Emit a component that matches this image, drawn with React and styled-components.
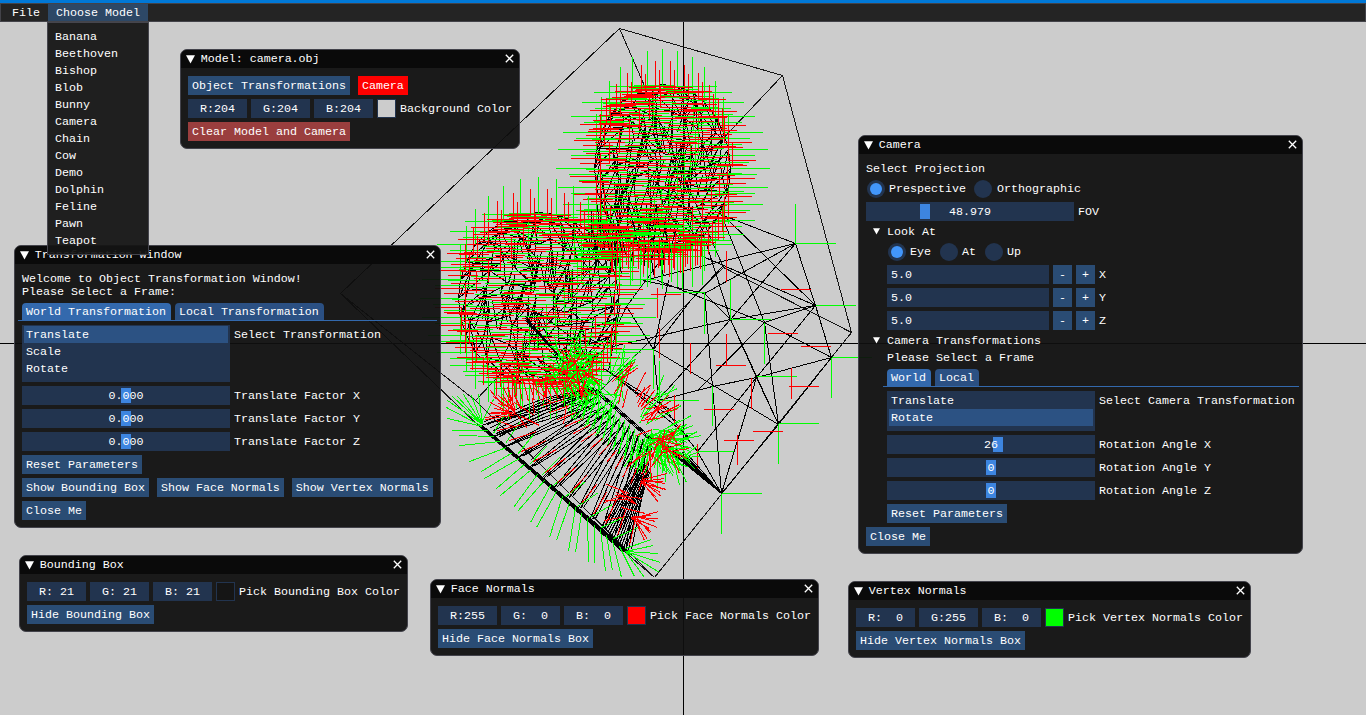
import React from "react";
import styled, { createGlobalStyle, css } from "styled-components";

const GlobalStyle = createGlobalStyle`
  html, body { margin: 0; padding: 0; overflow: hidden; background: #cccccc; }
  * { box-sizing: border-box; }
  body, button {
    font-family: "Liberation Mono", monospace;
    font-size: 11.667px;
    line-height: 13px;
    color: #fff;
  }
`;

const Desktop = styled.main`
  position: relative;
  width: 1366px;
  height: 715px;
  overflow: hidden;
  background: #cccccc;
  border-top: 3px solid #0078d7;
  white-space: pre;
`;

const Scene = styled.svg`
  position: absolute;
  left: 0;
  top: -3px;
  display: block;
`;

/* ---------- menu ---------- */

const MenuBar = styled.nav`
  position: relative;
  z-index: 3;
  display: flex;
  height: 19px;
  padding-left: 3px;
  background: #242424;
  border: 1px solid #434349;
`;

const MenuEntry = styled.div`
  height: 17px;
  padding: 3px 8px 0;
  background: ${(p) => (p.$open ? "#2d4866" : "transparent")};
`;

const MenuPopup = styled.div`
  position: absolute;
  z-index: 3;
  left: 47px;
  top: 19px;
  width: 102px;
  height: 233px;
  display: flex;
  flex-direction: column;
  gap: 4px;
  padding: 8px 7px 6px;
  background: rgba(20, 20, 20, 0.94);
  border: 1px solid #45454d;
`;

const MenuItem = styled.div`
  height: 13px;
`;

/* ---------- windows ---------- */

const WindowFrame = styled.section`
  position: absolute;
  z-index: 2;
  left: ${(p) => p.$x}px;
  top: ${(p) => p.$y - 3}px;
  width: ${(p) => p.$w}px;
  background: rgba(15, 15, 15, 0.94);
  border: 1px solid #43434b;
  border-radius: 7px;
  overflow: hidden;
`;

const TitleBar = styled.header`
  display: flex;
  align-items: flex-start;
  height: 18px;
  padding: 4px 5px 0;
  background: #0a0a0a;
`;

const TitleText = styled.div`
  flex: 1;
  margin-left: 5.7px;
  margin-top: -1px;
  height: 13px;
`;

const Body = styled.div`
  display: flex;
  flex-direction: column;
  align-items: flex-start;
  gap: 4px;
  padding: 8px 7px 7px;
`;

const Indent = styled.div`
  display: flex;
  flex-direction: column;
  align-items: flex-start;
  align-self: stretch;
  gap: 4px;
  padding-left: 21px;
`;

const Row = styled.div`
  display: flex;
  gap: ${(p) => p.$gap ?? 4}px;
`;

const Label = styled.div`
  padding-top: ${(p) => (p.$inline ? 4 : 1)}px;
  margin-bottom: -1px;
`;

const tones = { blue: "#2a4c74", red: "#ff0000", clear: "#9a3e3e" };

const Button = styled.button`
  height: 19px;
  width: ${(p) => (p.$square ? "19px" : "auto")};
  margin: 0;
  padding: 4px ${(p) => (p.$square ? 0 : 4)}px 2px;
  border: 0;
  border-radius: 0;
  text-align: center;
  background: ${(p) => tones[p.$tone ?? "blue"]};
`;

const frame = css`
  background: #22344f;
  height: 19px;
  padding: 4px 4px 2px;
`;

const ColorField = styled.div`
  ${frame}
  width: 59px;
  text-align: center;
`;

const Swatch = styled.div`
  width: 19px;
  height: 19px;
  border: 1px solid #22344f;
  background: ${(p) => p.$color};
`;

const TextField = styled.div`
  ${frame}
  width: 162px;
`;

const SliderTrack = styled.div`
  ${frame}
  position: relative;
  width: 208px;
`;

const SliderGrab = styled.div`
  position: absolute;
  left: ${(p) => p.$at}px;
  top: 2px;
  width: 10px;
  height: 15px;
  background: #3d85e0;
`;

const SliderValue = styled.div`
  position: relative;
  width: 200px;
  text-align: center;
`;

const TabBar = styled.div`
  display: flex;
  align-self: stretch;
  gap: 4px;
  height: 19px;
  margin: 0 -4px;
  padding: 1px 4px 0;
  border-bottom: 1px solid #3369ad;
`;

const Tab = styled.div`
  height: 17px;
  padding: 3px 5px 0 4px;
  border-radius: 4px 4px 0 0;
  background: ${(p) => (p.$active ? "#3369ad" : "#2b5083")};
`;

const ListBox = styled.div`
  width: 208px;
  height: ${(p) => p.$h}px;
  padding: 1px 2px;
  background: #22344f;
`;

const ListItem = styled.div`
  height: 17px;
  padding: 3px 2px 0;
  background: ${(p) => (p.$selected ? "#2c5283" : "transparent")};
`;

const RadioLabel = styled.div`
  display: flex;
  gap: 4px;
  height: 19px;
`;

const RadioCircle = styled.div`
  display: grid;
  place-items: center;
  width: 18px;
  height: 18px;
  margin: 0.5px;
  border-radius: 50%;
  background: #22344f;
`;

const RadioDot = styled.div`
  width: 12px;
  height: 12px;
  border-radius: 50%;
  background: #4296fa;
`;

const TreeHeader = styled.div`
  display: flex;
  align-items: center;
  gap: 7px;
  height: 13px;
  padding-left: 7px;
`;

const GlyphShift = styled.svg`
  display: block;
  margin-top: ${(p) => p.$dy ?? 0}px;
`;

function Arrow({ size, dy }) {
  return (
    <GlyphShift $dy={dy} width={size} height={size} viewBox="0 0 9 9">
      <path d="M0 0.2H9L4.5 8.4Z" fill="#fff" />
    </GlyphShift>
  );
}

function CloseIcon() {
  return (
    <svg width="9" height="9" viewBox="0 0 9 9">
      <path d="M0.8 0.8L8.2 8.2M8.2 0.8L0.8 8.2" stroke="#fff" strokeWidth="1.3" />
    </svg>
  );
}

function Window({ x, y, w, title, children }) {
  return (
    <WindowFrame $x={x} $y={y} $w={w}>
      <TitleBar>
        <Arrow size={9} dy={1} />
        <TitleText>{title}</TitleText>
        <CloseIcon />
      </TitleBar>
      <Body>{children}</Body>
    </WindowFrame>
  );
}

function Slider({ value, at, label }) {
  return (
    <Row>
      <SliderTrack>
        <SliderGrab $at={at} />
        <SliderValue>{value}</SliderValue>
      </SliderTrack>
      <Label $inline>{label}</Label>
    </Row>
  );
}

function Radio({ label, checked }) {
  return (
    <RadioLabel>
      <RadioCircle>{checked && <RadioDot />}</RadioCircle>
      <Label $inline>{label}</Label>
    </RadioLabel>
  );
}

function ColorPicker({ rgb, label }) {
  return (
    <Row>
      {["R", "G", "B"].map((c, i) => (
        <ColorField key={c}>{c + ":" + String(rgb[i]).padStart(3, " ")}</ColorField>
      ))}
      <Swatch $color={`rgb(${rgb.join(",")})`} />
      <Label $inline>{label}</Label>
    </Row>
  );
}

function StepperField({ label }) {
  return (
    <Row>
      <TextField>5.0</TextField>
      <Button $square>-</Button>
      <Button $square>+</Button>
      <Label $inline>{label}</Label>
    </Row>
  );
}

/* ---------- wireframe model ---------- */

function makeRandom(seed) {
  let a = seed;
  return () => {
    a = (a + 0x6d2b79f5) | 0;
    let t = Math.imul(a ^ (a >>> 15), 1 | a);
    t = (t + Math.imul(t ^ (t >>> 7), 61 | t)) ^ t;
    return ((t ^ (t >>> 14)) >>> 0) / 4294967296;
  };
}

const seg = (x1, y1, x2, y2) =>
  `M${Math.round(x1) + 0.5} ${Math.round(y1) + 0.5}L${Math.round(x2) + 0.5} ${Math.round(y2) + 0.5}`;

function buildReel(cx, cy, rx, ry, seed) {
  const rnd = makeRandom(seed);
  const black = [];
  const red = [];
  const green = [];
  const N = 28;
  const rings = [1, 0.9, 0.68, 0.42, 0.2];
  const pts = rings.map((r, k) =>
    Array.from({ length: N }, (_, i) => {
      const a = (i / N) * Math.PI * 2 + k * 0.1;
      const j = k ? 10 : 0;
      return [cx + Math.cos(a) * rx * r + (rnd() - 0.5) * j, cy + Math.sin(a) * ry * r + (rnd() - 0.5) * j];
    })
  );
  pts.forEach((ring, k) =>
    ring.forEach((p, i) => {
      const n = ring[(i + 1) % N];
      black.push(seg(...p, ...n));
      if (pts[k + 1] && (k < 2 || i % 2)) {
        black.push(seg(...p, ...pts[k + 1][i]));
        black.push(seg(...p, ...pts[k + 1][(i + 1) % N]));
      }
    })
  );
  for (let i = 0; i < 80; i++) {
    const a = rnd() * Math.PI * 2;
    const r = Math.sqrt(rnd()) * 0.8;
    const x = cx + Math.cos(a) * rx * r;
    const y = cy + Math.sin(a) * ry * r;
    black.push(seg(x, y - 14, x + (rnd() - 0.6) * 16, y + 14));
  }
  pts[0].forEach((p, i) => {
    const a = (i / N) * Math.PI * 2;
    const c = Math.cos(a);
    const s = Math.sin(a);
    const m = [cx + Math.cos(a + 0.12) * rx * 0.97, cy + Math.sin(a + 0.12) * ry * 0.97];
    if (Math.abs(c) > 0.2) {
      green.push(seg(...p, p[0] + Math.sign(c) * 39, p[1]));
      green.push(seg(p[0] - Math.sign(c) * 14, p[1] + 6, p[0] + Math.sign(c) * 26, p[1] + 6));
      red.push(seg(...m, m[0] + Math.sign(c) * 27, m[1]));
      red.push(seg(m[0] - Math.sign(c) * 12, m[1] + 5, m[0] + Math.sign(c) * 18, m[1] + 5));
    }
    if (Math.abs(s) > 0.08) {
      green.push(seg(...p, p[0], p[1] + Math.sign(s) * 36));
      red.push(seg(...m, m[0], m[1] + Math.sign(s) * 27));
      red.push(seg(m[0] + 4, m[1] - Math.sign(s) * 6, m[0] + 4, m[1] + Math.sign(s) * 18));
    }
  });
  for (let i = 0; i < 120; i++) {
    const y = cy - ry + ((i + 0.5) / 120) * ry * 2;
    const half = Math.sqrt(Math.max(0, 1 - ((y - cy) / ry) ** 2)) * rx;
    const x = cx + (((i * 0.618) % 1) * 2 - 1) * half;
    const u = cx + (((i * 0.618 + 0.37) % 1) * 2 - 1) * half;
    green.push(seg(x - 20, y, x + 20, y));
    red.push(seg(u - 15, y + 1, u + 15, y + 1));
    if (i % 2) {
      const w = cx + (rnd() * 2 - 1) * half;
      red.push(seg(w - 15, y, w + 15, y));
    }
    if (i % 8 === 0) {
      green.push(seg(x, y, x, y + 34));
      red.push(seg(u, y, u, y + 22));
    }
  }
  return { black, red, green };
}

/* the bracket joining the two reels */
function buildBridge() {
  const rnd = makeRandom(5);
  const black = [];
  const red = [];
  const green = [];
  for (let i = 0; i < 34; i++) {
    const y = 212 + i * 1.4;
    const x = 585 + rnd() * 90;
    const u = 590 + rnd() * 85;
    green.push(seg(x - 20, y, x + 20, y));
    red.push(seg(u - 15, y + 1, u + 15, y + 1));
    black.push(seg(u, y - 8, u + (rnd() - 0.5) * 14, y + 18));
  }
  for (let i = 0; i < 18; i++) {
    const x = 612 + i * 5.2;
    const y = 236 + rnd() * 10;
    red.push(seg(x, y, x, y + 28));
    if (i % 2) green.push(seg(x + 2, y + 6, x + 2, y + 44));
  }
  return { black, red, green };
}

function buildHood() {
  const rnd = makeRandom(77);
  const black = [];
  const red = [];
  const green = [];
  const lerp = (a, b, t) => a + (b - a) * t;
  const base = (t) => [lerp(481, 625, t), lerp(425, 551, t)];
  const rim = (t) => [lerp(590, 649, t), lerp(388, 442, t)];

  for (let i = -3; i <= 3; i++) black.push(seg(481 + i, 425 + i * 0.5, 625 + i * 0.6, 551 - i * 0.3));
  for (let i = 0; i < 6; i++) {
    black.push(seg(484 + i * 3, 421 + i * 3, 546 + i * 4, 397 + i));
    black.push(seg(546 + i * 4, 397 + i, 594, 388 + i));
    if (i < 3) black.push(seg(525, 316 + i * 2, 590 + i, 392));
    if (i % 2) black.push(seg(590 + i, 388, 649 + i, 440));
  }
  for (let i = 0; i <= 12; i++) {
    const t = i / 12;
    const [bx, by] = base(t);
    for (let k = 0; k < 3; k++) {
      const [qx, qy] = rim(Math.min(1, t * 0.95 + k * 0.035));
      black.push(seg(bx + k * 3, by - k, qx + k * 3 - 4, qy + k * 3));
    }
    const [rx, ry] = rim(t);
    red.push(seg(bx + 4, by - 6, lerp(bx, rx, 0.3) + 3, lerp(by, ry, 0.3)));
    red.push(seg(lerp(bx, rx, 0.55), lerp(by, ry, 0.55), lerp(bx, rx, 0.75), lerp(by, ry, 0.7)));
    green.push(seg(bx, by - 3, bx + 12 + t * 14, by - 26 + t * 14));
    green.push(seg(rx, ry, rx - 8 + t * 4, ry + 32));
    green.push(seg(rx - 4, ry + 2, rx - 18 + t * 10, ry + 30));
  }
  for (let i = 0; i < 13; i++) black.push(seg(625 - i * 2, 550 - i * 2, 649 - i * 0.6, 472 - i));

  const tips = [
    [446, 407], [447, 418], [451, 430], [459, 435], [459, 445], [469, 461], [481, 471], [484, 478],
    [496, 488], [500, 495], [513, 507], [517, 511], [530, 522], [536, 527], [549, 537], [556, 540],
    [568, 551], [575, 552], [588, 562], [594, 562], [605, 571], [612, 570], [621, 577], [634, 576], [644, 577],
    [659, 572], [660, 562], [658, 553], [653, 545],
  ];
  tips.forEach(([x, y], i) => {
    const [bx, by] = base(Math.min(1, Math.max(0.01, (i - 1) / 23)));
    green.push(seg(bx, by, x, y));
  });
  [[447, 400], [452, 396], [457, 396], [463, 394], [471, 395], [478, 394]].forEach(([x, y]) =>
    green.push(seg(482, 424, x, y))
  );

  const fan = (out, cx, cy, from, to, count, r0, r1, spread) => {
    for (let i = 0; i < count; i++) {
      const a = ((from + ((to - from) * i) / count) * Math.PI) / 180;
      const x = cx + (rnd() - 0.5) * spread;
      const y = cy + (rnd() - 0.5) * spread;
      const r = r0 + rnd() * (r1 - r0);
      out.push(seg(x, y, x + Math.cos(a) * r, y + Math.sin(a) * r));
    }
  };
  fan(green, 574, 369, 0, 360, 70, 14, 32, 30);
  fan(red, 574, 373, 0, 360, 26, 14, 26, 28);
  fan(green, 592, 388, 90, 200, 18, 20, 36, 16);
  fan(red, 535, 398, 200, 290, 14, 14, 24, 60);
  fan(green, 617, 396, 90, 300, 11, 18, 34, 26);
  fan(green, 614, 385, -85, -30, 10, 24, 34, 24);
  fan(green, 644, 412, -70, -20, 10, 20, 32, 26);
  fan(red, 625, 395, -80, -30, 12, 16, 26, 34);
  fan(red, 652, 412, -60, 0, 12, 18, 26, 24);
  fan(green, 654, 437, -40, 130, 42, 26, 42, 16);
  fan(green, 672, 452, -40, 110, 28, 14, 24, 26);
  fan(red, 656, 440, -60, 170, 22, 16, 30, 24);
  fan(red, 641, 481, -15, 60, 10, 20, 27, 4);
  fan(red, 633, 518, -15, 75, 10, 20, 27, 4);
  fan(red, 636, 505, 160, 230, 8, 20, 27, 24);
  fan(red, 512, 411, 170, 260, 12, 18, 30, 8);
  for (let i = 0; i < 14; i++) {
    red.push(seg(510 + i * 6, 402 - i * 0.5, 507 + i * 5, 376));
    green.push(seg(494 + i * 7, 380, 494 + i * 7, 394 + (i % 3) * 12));
  }
  for (let i = 0; i < 7; i++) {
    black.push(seg(652 + i * 6, 437 + i * 3, 721, 493));
    if (i % 2) black.push(seg(600 + i * 3, 366 + i * 2, 664 + i * 5, 402 + i * 7));
  }
  return { black, red, green };
}

const bodyEdges = [
  [723, 215, 795, 243], [795, 243, 815, 305], [815, 305, 831, 357], [831, 357, 778, 424],
  [778, 424, 721, 493], [795, 243, 643, 280], [795, 243, 730, 319], [730, 319, 657, 400],
  [723, 215, 815, 305], [700, 255, 815, 305], [815, 305, 730, 319], [730, 319, 612, 346],
  [730, 319, 778, 424], [764, 322, 778, 424], [764, 322, 815, 305], [764, 322, 720, 212],
  [831, 357, 756, 377], [756, 377, 712, 386], [712, 386, 658, 400], [712, 386, 721, 493],
  [756, 377, 721, 493], [756, 377, 778, 424], [756, 377, 730, 319], [778, 424, 653, 349],
  [653, 349, 626, 306], [712, 386, 704, 293], [815, 305, 756, 377], [831, 357, 764, 322],
  [764, 322, 657, 280], [653, 349, 668, 280], [653, 349, 690, 300], [690, 300, 723, 265],
  [658, 400, 697, 451], [697, 451, 721, 493], [697, 451, 756, 377], [764, 322, 697, 390],
  [704, 293, 730, 319], [704, 293, 795, 243], [643, 280, 704, 293], [660, 260, 626, 306],
  [620, 303, 608, 370], [626, 306, 608, 343], [700, 225, 730, 319], [653, 349, 658, 400],
];

const boxEdges = [
  [619, 28, 782, 75], [782, 75, 851, 332], [851, 332, 654, 577], [340, 293, 619, 28],
  [340, 293, 480, 427], [480, 427, 654, 577], [340, 293, 475, 400], [475, 400, 782, 75],
  [475, 400, 654, 577], [619, 28, 723, 267], [723, 267, 851, 332], [723, 267, 530, 460],
];

const bodyGreen = [
  [795, 203, 795, 243], [795, 243, 835, 243], [815, 305, 855, 305], [831, 357, 871, 357],
  [831, 357, 831, 397], [778, 423, 818, 423], [778, 423, 778, 463], [721, 493, 761, 493],
  [721, 493, 721, 533], [756, 376, 796, 376], [730, 319, 770, 319], [730, 279, 730, 319],
  [764, 322, 764, 363], [712, 385, 712, 425], [697, 451, 733, 451], [665, 292, 704, 292],
  [704, 292, 704, 333], [657, 400, 698, 400], [659, 360, 659, 400], [613, 349, 653, 349],
  [653, 349, 653, 388], [657, 440, 657, 488],
];

const bodyRed = [
  [767, 333, 797, 333], [800, 346, 830, 346], [715, 365, 745, 365], [788, 386, 818, 386],
  [703, 409, 733, 409], [752, 431, 782, 431], [723, 440, 753, 440], [780, 289, 810, 289],
  [650, 294, 680, 294], [657, 287, 657, 317], [659, 327, 659, 357], [690, 342, 690, 373],
  [726, 333, 726, 364], [791, 367, 791, 398], [751, 377, 751, 408], [737, 434, 737, 464],
  [674, 394, 674, 425], [697, 443, 697, 472], [726, 250, 726, 281],
];

const toSegs = (list) => list.map((l) => seg(...l));

const layers = [
  { black: toSegs(boxEdges), red: [], green: [] },
  { black: toSegs(bodyEdges), red: toSegs(bodyRed), green: toSegs(bodyGreen) },
  buildReel(662, 168, 68, 84, 11),
  buildReel(538, 298, 80, 86, 29),
  buildBridge(),
  buildHood(),
];

function Viewport() {
  return (
    <Scene width="1366" height="715" viewBox="0 0 1366 715" shapeRendering="crispEdges" fill="none">
      <path d="M683.5 22V715M0 343.5H1366" stroke="#000" />
      {layers.map((l, i) => (
        <g key={i}>
          <path d={l.black.join("")} stroke={i === 0 ? "#151515" : "#000"} />
          <path d={l.green.join("")} stroke="#0f0" />
          <path d={l.red.join("")} stroke="#f00" />
        </g>
      ))}
    </Scene>
  );
}

const models = [
  "Banana", "Beethoven", "Bishop", "Blob", "Bunny", "Camera", "Chain",
  "Cow", "Demo", "Dolphin", "Feline", "Pawn", "Teapot",
];

export default function App() {
  return (
    <Desktop>
      <GlobalStyle />
      <Viewport />
      <MenuBar>
        <MenuEntry>File</MenuEntry>
        <MenuEntry $open>Choose Model</MenuEntry>
      </MenuBar>
      <MenuPopup>
        {models.map((m) => (
          <MenuItem key={m}>{m}</MenuItem>
        ))}
      </MenuPopup>

      <Window x={180} y={49} w={340} title="Model: camera.obj">
        <Row $gap={8}>
          <Button>Object Transformations</Button>
          <Button $tone="red">Camera</Button>
        </Row>
        <ColorPicker rgb={[204, 204, 204]} label="Background Color" />
        <Button $tone="clear">Clear Model and Camera</Button>
      </Window>

      <Window x={14} y={245} w={427} title="Transformation Window">
        <Label>{"Welcome to Object Transformation Window!\nPlease Select a Frame:"}</Label>
        <TabBar>
          <Tab $active>World Transformation</Tab>
          <Tab>Local Transformation</Tab>
        </TabBar>
        <Row>
          <ListBox $h={57}>
            <ListItem $selected>Translate</ListItem>
            <ListItem>Scale</ListItem>
            <ListItem>Rotate</ListItem>
          </ListBox>
          <Label $inline>Select Transformation</Label>
        </Row>
        {["X", "Y", "Z"].map((axis) => (
          <Slider key={axis} value="0.000" at={99} label={"Translate Factor " + axis} />
        ))}
        <Button>Reset Parameters</Button>
        <Row $gap={8}>
          <Button>Show Bounding Box</Button>
          <Button>Show Face Normals</Button>
          <Button>Show Vertex Normals</Button>
        </Row>
        <Button>Close Me</Button>
      </Window>

      <Window x={858} y={135} w={445} title="Camera">
        <Label>Select Projection</Label>
        <Row $gap={8}>
          <Radio label="Prespective" checked />
          <Radio label="Orthographic" />
        </Row>
        <Slider value="48.979" at={54} label="FOV" />
        <TreeHeader>
          <Arrow size={7} />
          <Label>Look At</Label>
        </TreeHeader>
        <Indent>
          <Row $gap={8}>
            <Radio label="Eye" checked />
            <Radio label="At" />
            <Radio label="Up" />
          </Row>
          <StepperField label="X" />
          <StepperField label="Y" />
          <StepperField label="Z" />
        </Indent>
        <TreeHeader>
          <Arrow size={7} />
          <Label>Camera Transformations</Label>
        </TreeHeader>
        <Indent>
          <Label>Please Select a Frame</Label>
          <TabBar>
            <Tab $active>World</Tab>
            <Tab>Local</Tab>
          </TabBar>
          <Row>
            <ListBox $h={40}>
              <ListItem>Translate</ListItem>
              <ListItem $selected>Rotate</ListItem>
            </ListBox>
            <Label $inline>Select Camera Transformation</Label>
          </Row>
          <Slider value="26" at={106} label="Rotation Angle X" />
          <Slider value="0" at={99} label="Rotation Angle Y" />
          <Slider value="0" at={99} label="Rotation Angle Z" />
          <Button>Reset Parameters</Button>
        </Indent>
        <Button>Close Me</Button>
      </Window>

      <Window x={19} y={555} w={389} title="Bounding Box">
        <ColorPicker rgb={[21, 21, 21]} label="Pick Bounding Box Color" />
        <Button>Hide Bounding Box</Button>
      </Window>

      <Window x={430} y={579} w={389} title="Face Normals">
        <ColorPicker rgb={[255, 0, 0]} label="Pick Face Normals Color" />
        <Button>Hide Face Normals Box</Button>
      </Window>

      <Window x={848} y={581} w={403} title="Vertex Normals">
        <ColorPicker rgb={[0, 255, 0]} label="Pick Vertex Normals Color" />
        <Button>Hide Vertex Normals Box</Button>
      </Window>
    </Desktop>
  );
}
